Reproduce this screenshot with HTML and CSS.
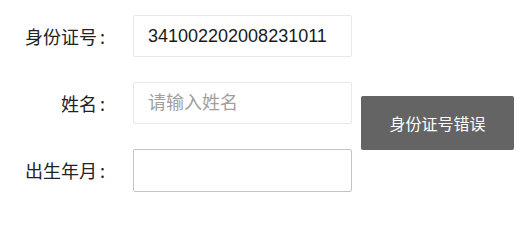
FILE: index.html
```html
<!DOCTYPE html>
<html lang="zh-CN">
<head>
<meta charset="utf-8">
<title>表单</title>
<link rel="stylesheet" href="styles.css">
</head>
<body>
<div class="page">
  <form class="form">
    <label class="label" for="idno">身份证号<span class="colon">:</span></label>
    <input class="field" id="idno" type="text" value="341002202008231011">
    <label class="label" for="name">姓名<span class="colon">:</span></label>
    <input class="field" id="name" type="text" placeholder="请输入姓名">
    <label class="label" for="birth">出生年月<span class="colon">:</span></label>
    <input class="field field-dark" id="birth" type="text">
  </form>
  <button class="btn" type="button">身份证号错误</button>
</div>
</body>
</html>
```
FILE: styles.css
```css
html, body {
  margin: 0;
  padding: 0;
  background: #fff;
}
body {
  font-family: "Noto Sans CJK SC", "Liberation Sans", sans-serif;
  color: #222;
}
.page {
  display: flex;
  align-items: flex-start;
  padding-top: 15px;
}
.form {
  display: grid;
  grid-template-columns: 105px 219px;
  grid-template-rows: 42px 42px 43px;
  column-gap: 28px;
  row-gap: 25px;
  align-items: stretch;
  margin: 0;
}
.label {
  text-align: right;
  font-size: 18px;
  line-height: 42px;
  color: #222;
}
.colon {
  margin-left: 3px;
}
.field {
  box-sizing: border-box;
  width: 219px;
  height: 100%;
  margin: 0;
  padding: 0 12px 0 14px;
  border: 1px solid #e8e8e8;
  border-radius: 2px;
  font-family: "Liberation Sans", "Noto Sans CJK SC", sans-serif;
  font-size: 18px;
  color: #1a1a1a;
  background: #fff;
  outline: none;
}
.field::placeholder {
  color: #a0a0a0;
}
.field-dark {
  border-color: #c4c4c4;
}
.btn {
  box-sizing: border-box;
  margin: 81px 0 0 9px;
  width: 153px;
  height: 54px;
  border: none;
  border-radius: 2px;
  background: #646464;
  color: #fff;
  font-family: "Noto Sans CJK SC", sans-serif;
  font-size: 16px;
  padding: 0;
}
```
